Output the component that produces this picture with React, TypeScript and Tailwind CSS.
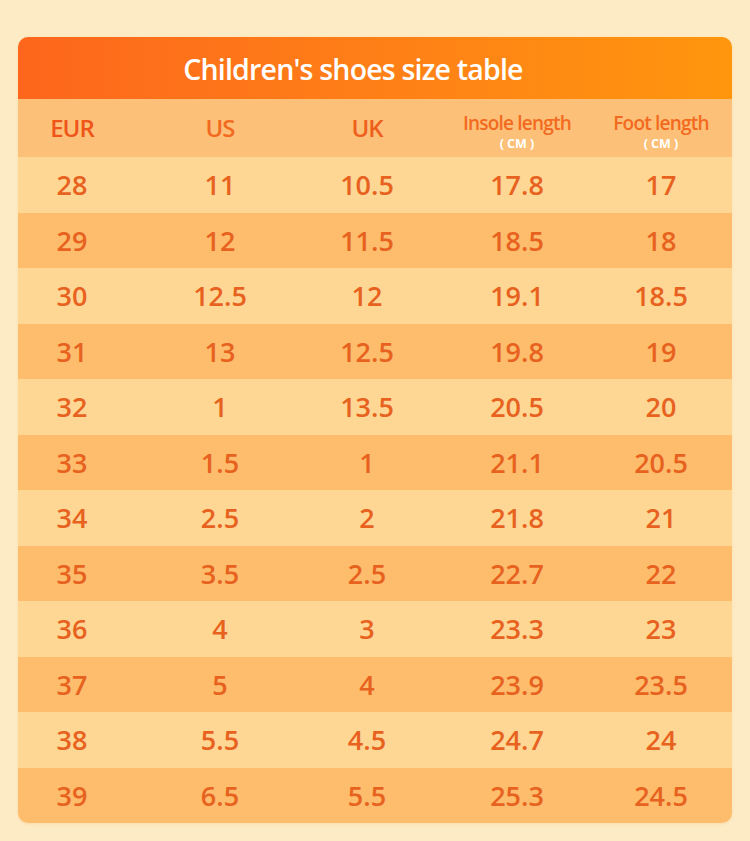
import React from "react";

const rows = [
  ["28", "11", "10.5", "17.8", "17"],
  ["29", "12", "11.5", "18.5", "18"],
  ["30", "12.5", "12", "19.1", "18.5"],
  ["31", "13", "12.5", "19.8", "19"],
  ["32", "1", "13.5", "20.5", "20"],
  ["33", "1.5", "1", "21.1", "20.5"],
  ["34", "2.5", "2", "21.8", "21"],
  ["35", "3.5", "2.5", "22.7", "22"],
  ["36", "4", "3", "23.3", "23"],
  ["37", "5", "4", "23.9", "23.5"],
  ["38", "5.5", "4.5", "24.7", "24"],
  ["39", "6.5", "5.5", "25.3", "24.5"],
];

const grid = "grid grid-cols-[108px_188px_106px_194px_94px] items-center justify-items-center";

export default function App() {
  return (
    <div
      className="w-[750px] h-[841px] bg-[#fdebc5] pt-[37px] px-[18px]"
      style={{ fontFamily: '"Open Sans", "Noto Sans", sans-serif' }}
    >
      <div className="w-[714px] rounded-[10px] overflow-hidden shadow-[0_1px_3px_rgba(230,140,40,0.15)]">
        <div className="h-[62px] bg-gradient-to-r from-[#fd661c] to-[#ff960d] flex items-center justify-center pr-[44px]">
          <span className="text-white text-[28.5px] font-semibold tracking-[-0.8px] leading-none pt-[2px]">
            Children's shoes size table
          </span>
        </div>
        <div className={`${grid} h-[58px] bg-[#fdc078]`}>
          <span className="text-[#ef5419] text-[24px] font-semibold tracking-[-1px] leading-none">EUR</span>
          <span className="text-[#f26a20] text-[24px] font-semibold tracking-[-1px] leading-none">US</span>
          <span className="text-[#ee5f1c] text-[24px] font-semibold tracking-[-1px] leading-none">UK</span>
          <div className="flex flex-col items-center gap-[7px] pt-[9px] whitespace-nowrap">
            <span className="text-[#f26a20] text-[19px] font-semibold tracking-[-0.8px] leading-[16px]">Insole length</span>
            <span className="text-white text-[12.5px] font-bold leading-[12px]">( CM )</span>
          </div>
          <div className="flex flex-col items-center gap-[7px] pt-[9px] whitespace-nowrap">
            <span className="text-[#f26a20] text-[19px] font-semibold tracking-[-0.8px] leading-[16px]">Foot length</span>
            <span className="text-white text-[12.5px] font-bold leading-[12px]">( CM )</span>
          </div>
        </div>
        {rows.map((r, i) => (
          <div
            key={i}
            className={`${grid} h-[55.5px] ${i % 2 === 0 ? "bg-[#ffd794]" : "bg-[#fdbd6c]"}`}
          >
            {r.map((c, j) => (
              <span key={j} className="text-[#e8621f] text-[27px] font-semibold leading-none">
                {c}
              </span>
            ))}
          </div>
        ))}
      </div>
    </div>
  );
}
